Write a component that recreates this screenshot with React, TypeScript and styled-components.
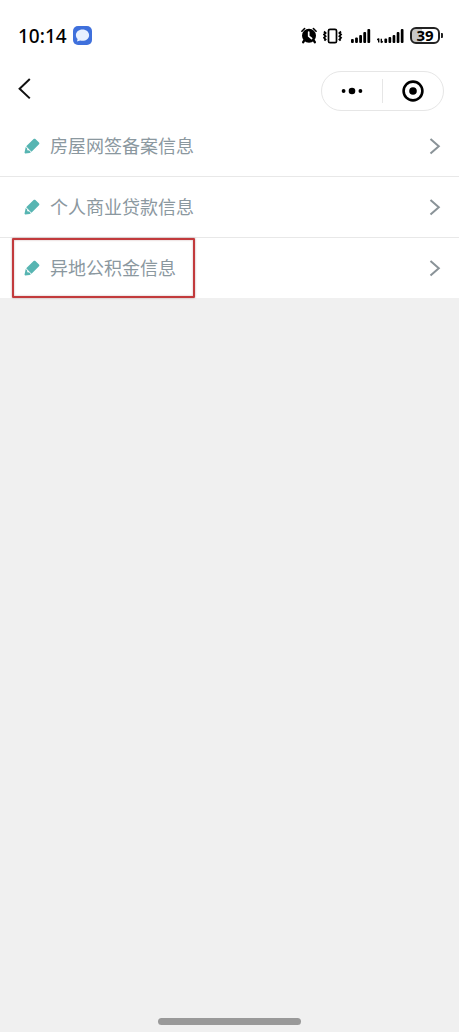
import React from "react";
import styled, { createGlobalStyle } from "styled-components";

const GlobalStyle = createGlobalStyle`
  *, *::before, *::after { box-sizing: border-box; }
  body {
    margin: 0;
    background: #f0f0f0;
    font-family: "Noto Sans", "Noto Sans CJK SC", sans-serif;
  }
`;

const Screen = styled.div`
  min-height: 100vh;
  display: flex;
  flex-direction: column;
`;

const StatusBar = styled.div`
  display: flex;
  align-items: center;
  justify-content: space-between;
  height: 71px;
  padding: 0 16px 0 18px;
  background: #fff;
  color: #000;
`;

const StatusGroup = styled.div`
  display: flex;
  align-items: center;
  gap: 6px;
`;

const Time = styled.span`
  font-size: 19px;
  line-height: 24px;
  font-weight: 500;
`;

const Battery = styled.div`
  position: relative;
  display: flex;
  align-items: center;
  justify-content: center;
  width: 30px;
  height: 17px;
  margin-right: 3px;
  border: 2px solid #222;
  border-radius: 6px;
  background: linear-gradient(to right, #c8c8c8 40%, #fff 40%);
  font-size: 15px;
  line-height: 15px;
  font-weight: 700;

  &::after {
    content: "";
    position: absolute;
    right: -5px;
    top: 4px;
    width: 2px;
    height: 5px;
    border-radius: 0 1px 1px 0;
    background: #222;
  }
`;

const NavBar = styled.header`
  display: flex;
  align-items: flex-start;
  justify-content: space-between;
  height: 45px;
  padding: 0 15px 0 12px;
  background: #fff;
`;

const IconButton = styled.button`
  display: flex;
  align-items: center;
  justify-content: center;
  padding: 0;
  border: 0;
  background: none;
  color: #000;
  cursor: pointer;
`;

const BackButton = styled(IconButton)`
  width: 24px;
  height: 35px;
`;

const Capsule = styled.div`
  display: flex;
  align-items: center;
  width: 123px;
  height: 40px;
  border: 1px solid #e6e6e6;
  border-radius: 20px;
`;

const CapsuleButton = styled(IconButton)`
  flex: 1;
  height: 24px;

  & + & { border-left: 1px solid #e6e6e6; }
`;

const List = styled.ul`
  margin: 0;
  padding: 0;
  list-style: none;
  background: #fff;
`;

const Item = styled.li`
  position: relative;

  & + & { border-top: 1px solid #e8e8e8; }
`;

const RowLink = styled.a`
  display: flex;
  align-items: center;
  height: 60px;
  padding: 0 18px 0 24px;
  color: #8b989f;
  text-decoration: none;
`;

const Label = styled.span`
  flex: 1;
  margin-left: 10px;
  padding-bottom: 2px;
  font-family: "Noto Sans CJK SC", sans-serif;
  font-size: 18px;
  line-height: 24px;
  font-weight: 400;
`;

const Highlight = styled.div`
  position: absolute;
  left: 12px;
  top: 0;
  bottom: 0;
  width: 183px;
  border: 2px solid #c23a3c;
  border-radius: 1px;
  box-shadow: 0 0 2px rgba(120, 40, 40, 0.5), inset 0 0 2px rgba(120, 40, 40, 0.4);
  pointer-events: none;
`;

const Footer = styled.div`
  display: flex;
  justify-content: center;
  margin-top: auto;
  padding-bottom: 7px;
`;

const HomeBar = styled.div`
  width: 31%;
  height: 7px;
  border-radius: 4px;
  background: #999;
`;

const MessageIcon = () => (
  <svg width="19" height="19" viewBox="0 0 19 19" aria-hidden="true">
    <rect width="19" height="19" rx="5" fill="#3f70dc" />
    <path d="M9.5 3.600c3.700 0 6.600 2.400 6.600 5.600s-2.900 5.600-6.600 5.600c-.8 0-1.600-.1-2.300-.3L4 15.600l.6-2.700C3.500 11.900 2.900 10.600 2.900 9.200c0-3.200 2.900-5.600 6.600-5.600z" fill="#e9f1ff" />
  </svg>
);

const AlarmIcon = () => (
  <svg width="16" height="17" viewBox="0 0 16 17" fill="none" stroke="#000" aria-hidden="true">
    <circle cx="8" cy="8.700" r="7" fill="#000" stroke="none" />
    <path d="M.9 4.200 3.600 1.500M15.100 4.200 12.400 1.500" strokeWidth="1.600" strokeLinecap="round" />
    <path d="M3.200 13.500 2.200 15.200M12.800 13.500l1 1.700" strokeWidth="2.400" strokeLinecap="round" />
    <path d="M7.700 5v4.200l2.900 2.300" stroke="#fff" strokeWidth="1.700" strokeLinecap="round" />
  </svg>
);

const VibrateIcon = () => (
  <svg width="22" height="16" viewBox="0 0 22 16" fill="none" stroke="#000" aria-hidden="true">
    <rect x="5.500" y="1.300" width="8" height="13.400" rx="1.500" strokeWidth="1.700" />
    <path d="M1 3.500 2.600 5 1 6.600 2.600 8.200 1 9.800 2.600 11.400 1.400 12.700M18 3.500 16.400 5 18 6.600l-1.600 1.600L18 9.800l-1.600 1.600 1.200 1.300" strokeWidth="1.800" />
  </svg>
);

const SignalIcon = () => (
  <svg width="20" height="16" viewBox="0 0 20 16" fill="#000" aria-hidden="true">
    <rect x="0" y="11" width="2.800" height="4" rx="1" />
    <rect x="4.100" y="9.500" width="2.800" height="5.500" rx="1" />
    <rect x="8.200" y="7" width="2.800" height="8" rx="1" />
    <rect x="12.300" y="4" width="2.800" height="11" rx="1" />
    <rect x="16.400" y="1" width="2.800" height="14" rx="1" />
  </svg>
);

const DataSignalIcon = () => (
  <svg width="27" height="16" viewBox="0 0 27 16" fill="#000" aria-hidden="true">
    <path d="M1.700 10.500v4M0.300 12l1.400-1.500M4.300 10.800v4M5.700 13.300l-1.400 1.500" fill="none" stroke="#000" strokeWidth="1.400" />
    <rect x="7.400" y="10.500" width="2.700" height="4.500" rx="1" />
    <rect x="11.500" y="9" width="2.700" height="6" rx="1" />
    <rect x="15.600" y="7" width="2.700" height="8" rx="1" />
    <rect x="19.700" y="4" width="2.700" height="11" rx="1" />
    <rect x="23.800" y="1" width="2.700" height="14" rx="1" />
  </svg>
);

const BackIcon = () => (
  <svg width="14" height="22" viewBox="0 0 14 22" fill="none" aria-hidden="true">
    <path d="M12.800 1 2.600 10.700l10.200 9.700" stroke="#111" strokeWidth="2" />
  </svg>
);

const MoreIcon = () => (
  <svg width="22" height="8" viewBox="0 0 22 8" aria-hidden="true">
    <circle cx="2.600" cy="4" r="1.900" />
    <circle cx="11" cy="4" r="3.300" />
    <circle cx="19.400" cy="4" r="1.900" />
  </svg>
);

const TargetIcon = () => (
  <svg width="22" height="22" viewBox="0 0 22 22" aria-hidden="true">
    <circle cx="11" cy="11" r="9.400" fill="none" stroke="#000" strokeWidth="2.600" />
    <circle cx="11" cy="11" r="3.800" />
  </svg>
);

const PencilIcon = () => (
  <svg width="16" height="16" viewBox="0 0 16 16" fill="#57b5b2" aria-hidden="true">
    <path d="M9.600 1.100c.5-.5 1.300-.5 1.800 0l3.600 3.500c.5.500.5 1.200 0 1.700L7.500 13.700 2.200 8.300z" />
    <path d="M1.700 8.900 3.100 10.300 3.300 12.200 5.300 12.500 6.900 14.200 5.600 15 1.200 15.400.5 14.700z" />
  </svg>
);

const ChevronIcon = () => (
  <svg width="12" height="18" viewBox="0 0 12 18" fill="none" aria-hidden="true">
    <path d="M1.500 2 9.800 9.300l-8.300 7.300" stroke="#8a9398" strokeWidth="2" />
  </svg>
);

const rows = [
  { label: "房屋网签备案信息", highlighted: false },
  { label: "个人商业贷款信息", highlighted: false },
  { label: "异地公积金信息", highlighted: true },
];

export default function App() {
  return (
    <Screen>
      <GlobalStyle />
      <StatusBar>
        <StatusGroup>
          <Time>10:14</Time>
          <MessageIcon />
        </StatusGroup>
        <StatusGroup>
          <AlarmIcon />
          <VibrateIcon />
          <SignalIcon />
          <DataSignalIcon />
          <Battery>39</Battery>
        </StatusGroup>
      </StatusBar>
      <NavBar>
        <BackButton type="button" aria-label="返回">
          <BackIcon />
        </BackButton>
        <Capsule>
          <CapsuleButton type="button" aria-label="更多">
            <MoreIcon />
          </CapsuleButton>
          <CapsuleButton type="button" aria-label="关闭">
            <TargetIcon />
          </CapsuleButton>
        </Capsule>
      </NavBar>
      <List>
        {rows.map((row) => (
          <Item key={row.label}>
            <RowLink href="#">
              <PencilIcon />
              <Label>{row.label}</Label>
              <ChevronIcon />
            </RowLink>
            {row.highlighted && <Highlight />}
          </Item>
        ))}
      </List>
      <Footer>
        <HomeBar />
      </Footer>
    </Screen>
  );
}
